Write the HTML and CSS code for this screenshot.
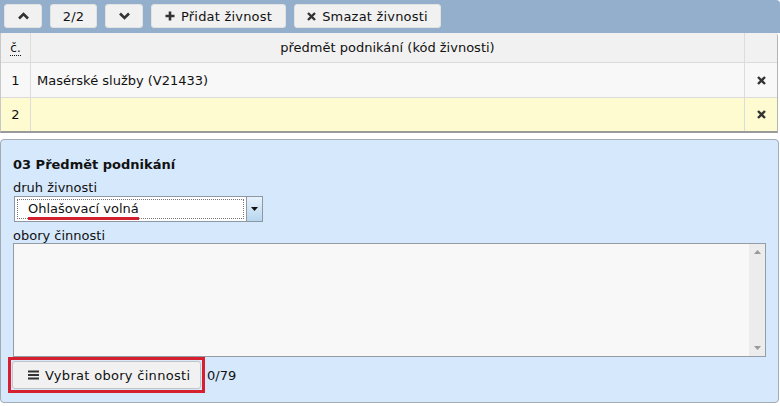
FILE: index.html
```html
<!DOCTYPE html>
<html lang="cs">
<head>
    <meta charset="UTF-8">
    <title>Předmět podnikání</title>
    <link rel="stylesheet" href="styles.css">
</head>
<body>

    <div class="toolbar">
        <button class="btn btn-icon">
            <svg width="11" height="8" viewBox="0 0 11 8"><path d="M1 6.5 L5.5 2 L10 6.5" fill="none" stroke="#333" stroke-width="2.6"/></svg>
        </button>
        <button class="btn btn-count">2/2</button>
        <button class="btn btn-icon">
            <svg width="11" height="8" viewBox="0 0 11 8"><path d="M1 1.5 L5.5 6 L10 1.5" fill="none" stroke="#333" stroke-width="2.6"/></svg>
        </button>
        <button class="btn btn-add">
            <svg width="10" height="10" viewBox="0 0 10 10"><path d="M5 0.5 V9.5 M0.5 5 H9.5" stroke="#333" stroke-width="2.6"/></svg>
            Přidat živnost
        </button>
        <button class="btn btn-del">
            <svg width="9" height="9" viewBox="0 0 9 9"><path d="M1 1 L8 8 M8 1 L1 8" stroke="#333" stroke-width="2.4"/></svg>
            Smazat živnosti
        </button>
    </div>

    <table class="grid">
        <thead>
            <tr>
                <th class="col-num"><abbr title="číslo">č.</abbr></th>
                <th>předmět podnikání (kód živnosti)</th>
                <th class="col-del"></th>
            </tr>
        </thead>
        <tbody>
            <tr>
                <td class="col-num">1</td>
                <td>Masérské služby (V21433)</td>
                <td class="col-del"><svg width="9" height="9" viewBox="0 0 9 9"><path d="M1 1 L8 8 M8 1 L1 8" stroke="#333" stroke-width="2.4"/></svg></td>
            </tr>
            <tr class="selected">
                <td class="col-num">2</td>
                <td></td>
                <td class="col-del"><svg width="9" height="9" viewBox="0 0 9 9"><path d="M1 1 L8 8 M8 1 L1 8" stroke="#333" stroke-width="2.4"/></svg></td>
            </tr>
        </tbody>
    </table>

    <div class="panel">
        <h2>03 Předmět podnikání</h2>

        <label>druh živnosti</label>
        <div class="select">
            <div class="select-value"><span class="marked">Ohlašovací volná</span></div>
            <div class="select-arrow">
                <svg width="7" height="4" viewBox="0 0 7 4"><path d="M0 0 H7 L3.5 4 Z" fill="#111"/></svg>
            </div>
        </div>

        <label class="label-area">obory činnosti</label>
        <div class="textarea">
            <div class="scrollbar">
                <svg width="7" height="4" viewBox="0 0 7 4"><path d="M0 4 H7 L3.5 0 Z" fill="#999"/></svg>
                <svg width="7" height="4" viewBox="0 0 7 4"><path d="M0 0 H7 L3.5 4 Z" fill="#999"/></svg>
            </div>
        </div>

        <div class="pick-row">
            <div class="highlight">
                <button class="btn btn-pick">
                    <svg width="11" height="10" viewBox="0 0 11 10"><path d="M0 1.5 H11 M0 5 H11 M0 8.5 H11" stroke="#333" stroke-width="2"/></svg>
                    Vybrat obory činnosti
                </button>
            </div>
            <span class="count">0/79</span>
        </div>
    </div>

</body>
</html>
```

FILE: styles.css
```css
* {
    margin: 0;
    padding: 0;
    box-sizing: border-box;
}

body {
    font-family: 'DejaVu Sans', Verdana, sans-serif;
    font-size: 13px;
    color: #111;
    background-color: #fff;
    width: 780px;
}


.toolbar {
    background-color: #93afcc;
    height: 33px;
    padding: 4px 4px 0 4px;
    display: flex;
    gap: 8px;
    border-top-right-radius: 4px;
}

.btn {
    font-family: inherit;
    font-size: 13px;
    color: #111;
    height: 24px;
    padding: 0 11px;
    background-color: #f1f1f1;
    border: 1px solid #e2e2e2;
    border-radius: 3px;
    display: flex;
    align-items: center;
    gap: 6px;
    letter-spacing: 0.2px;
}

.btn-icon {
    width: 38px;
    justify-content: center;
    padding: 0;
}

.btn-count {
    width: 47px;
    justify-content: center;
    padding: 0;
}

.btn-add {
    width: 135px;
    justify-content: center;
    padding: 0;
}

.btn-del {
    width: 147px;
    justify-content: center;
    padding: 0;
}


.grid {
    width: 778px;
    border-collapse: separate;
    border-spacing: 0;
    border: 1px solid #b4b4b4;
    border-top: none;
    border-left: 1px solid #c8c8c8;
    border-bottom: 2px solid #9a9a9a;
    border-top-right-radius: 4px;
}

.grid th {
    font-weight: normal;
    height: 30px;
    background-color: #f1f1f1;
    border-bottom: 1px solid #dcdcdc;
    text-align: center;
}

.grid td {
    height: 35px;
    background-color: #f8f8f8;
    border-bottom: 1px solid #dcdcdc;
    padding-left: 6px;
}

.grid tr.selected td {
    height: 33px;
    background-color: #fffbd0;
    border-bottom: none;
}

.grid .col-num {
    width: 30px;
    padding: 0;
    text-align: center;
    border-right: 1px solid #dcdcdc;
}

.grid .col-del {
    width: 33px;
    padding: 0;
    text-align: center;
    border-left: 1px solid #dcdcdc;
}

.grid th.col-del {
    border-top-right-radius: 4px;
}

abbr {
    text-decoration: none;
    border-bottom: 1px dotted #111;
    font-size: 12px;
}


.panel {
    margin-top: 6px;
    width: 779px;
    height: 264px;
    background-color: #d5e8fc;
    border: 1px solid #a3aab2;
    border-radius: 4px;
    padding: 16px 12px 0 12px;
}

.panel h2 {
    font-size: 13px;
    font-weight: bold;
    line-height: 18px;
    margin-bottom: 6px;
}

.panel label {
    display: block;
    line-height: 16px;
}

.select {
    margin: 0 0 0 1px;
    width: 249px;
    height: 26px;
    display: flex;
    border: 1px solid #8e98a3;
    background-color: #fff;
}

.select-value {
    flex: 1;
    margin: 2px;
    border: 1px dotted #777;
    padding-left: 10px;
    line-height: 18px;
}

.marked {
    display: inline-block;
    line-height: 16px;
    border-bottom: 3px solid #d2202e;
}

.select-arrow {
    width: 16px;
    display: flex;
    align-items: center;
    justify-content: center;
    background: linear-gradient(#e8f2fb, #b7d6ee);
    border-left: 1px solid #8e98a3;
}

.panel .label-area {
    margin-top: 6px;
    line-height: 15px;
}

.textarea {
    width: 753px;
    height: 114px;
    background-color: #f8f8f8;
    border: 1px solid #969ca3;
    display: flex;
    justify-content: flex-end;
}

.scrollbar {
    width: 16px;
    background-color: #ececec;
    display: flex;
    flex-direction: column;
    justify-content: space-between;
    align-items: center;
    padding: 6px 0;
}


.pick-row {
    margin: 0 0 0 -5px;
    display: flex;
    align-items: center;
    gap: 2px;
}

.highlight {
    border: 3px solid #d6202f;
    padding: 1px;
}

.btn-pick {
    height: 28px;
    width: 189px;
    padding: 0 0 0 15px;
    background-color: #f1f1f1;
    border: 1px solid #c4c4c4;
    letter-spacing: 0.3px;
}
```
